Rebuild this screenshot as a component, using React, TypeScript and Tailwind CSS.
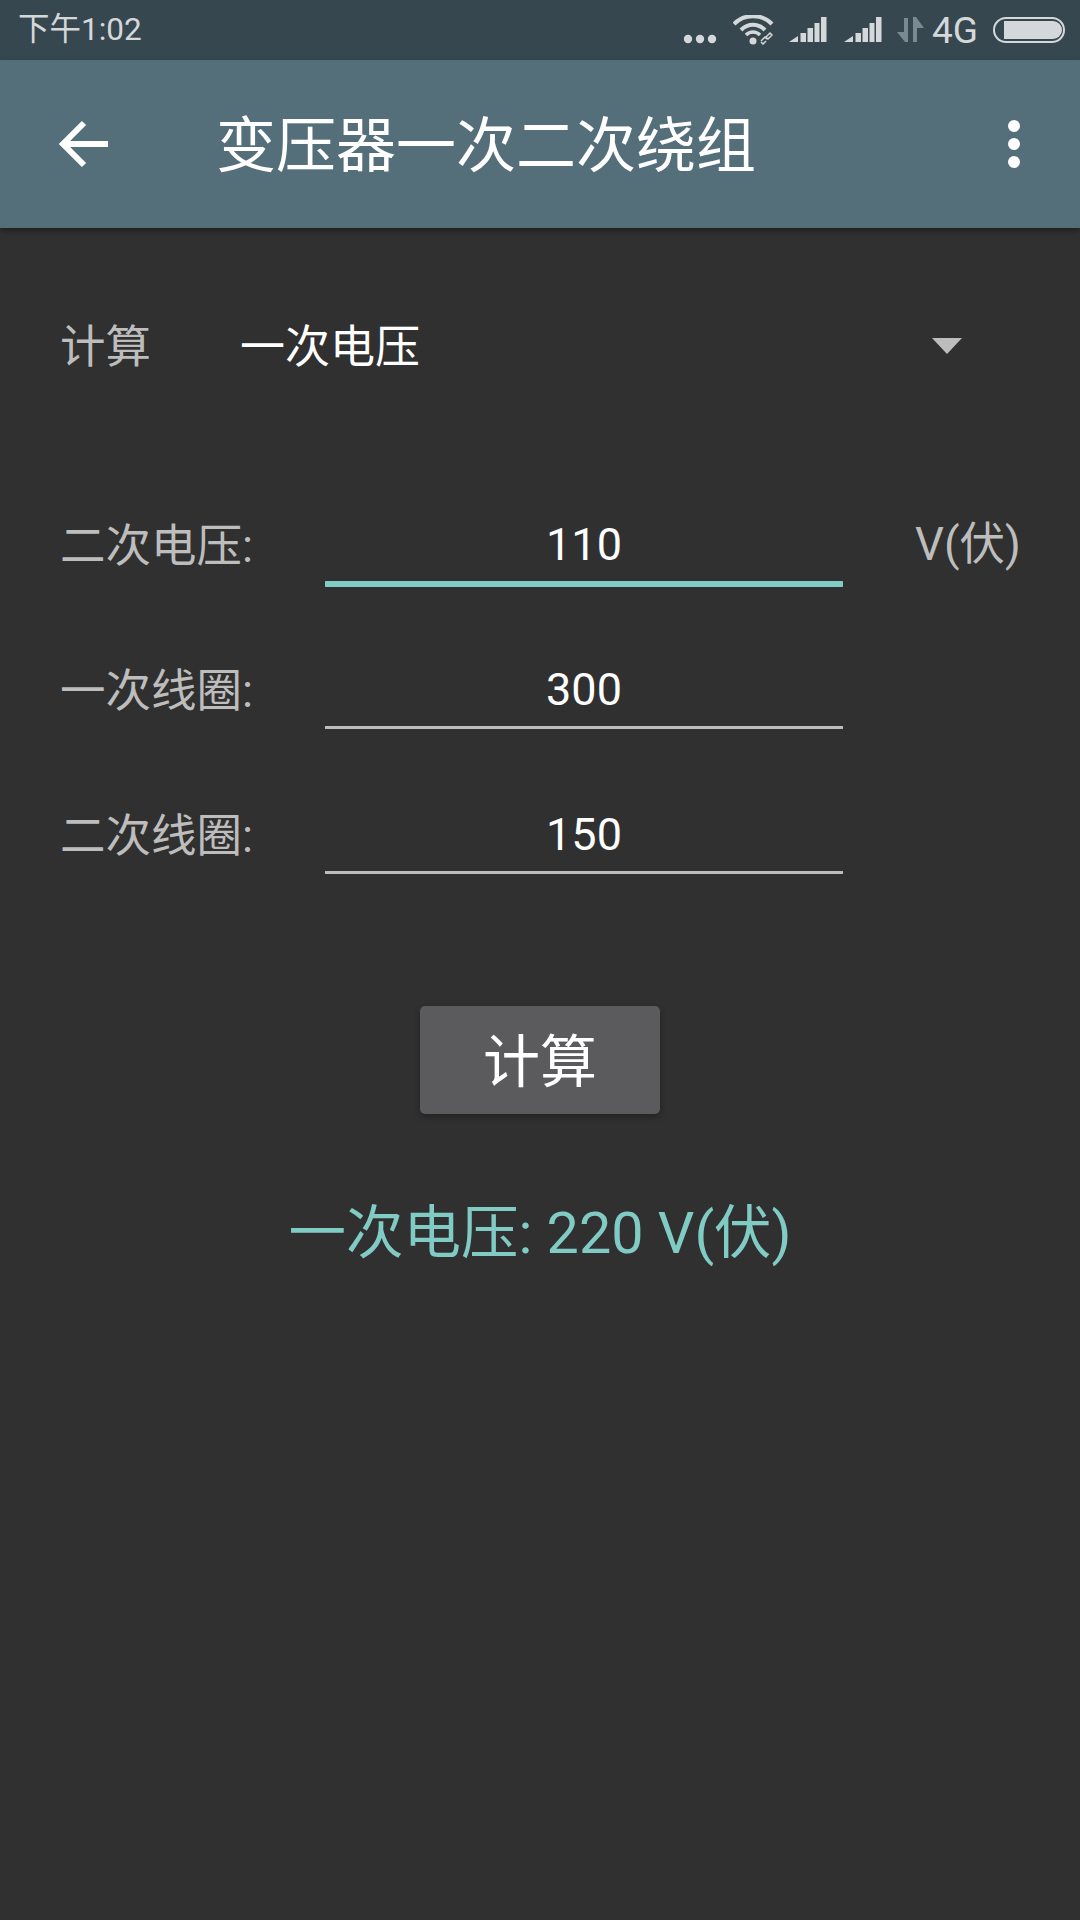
import React from 'react';

const font = 'font-["Roboto","Noto_Sans_CJK_SC",sans-serif]';

const Signal = () => (
  <svg width="38" height="26" viewBox="0 0 38 26" fill="#d5d8da">
    <path d="M0 25 L9 19 V25 Z" />
    <rect x="11.5" y="16" width="5.5" height="9" />
    <rect x="18.5" y="11" width="5.5" height="14" />
    <rect x="25.5" y="6" width="5" height="19" />
    <rect x="32" y="0" width="5.5" height="25" />
  </svg>
);

const StatusBar = () => (
  <div className="h-[60px] bg-[#37474f] flex items-center pl-[18px] pr-[15px] text-[#d5d8da]">
    <span className="text-[31.5px] leading-none">下午1:02</span>
    <div className="ml-auto flex items-center">
      <svg width="34" height="10" viewBox="0 0 34 10" fill="#d5d8da" className="mt-[18px]">
        <circle cx="5" cy="5" r="4.2" />
        <circle cx="17" cy="5" r="4.2" />
        <circle cx="29" cy="5" r="4.2" />
      </svg>
      <svg width="42" height="30" viewBox="0 0 42 30" fill="none" className="ml-[16px]">
        <path d="M1 9 C11 -1.5 29 -1.5 39 9" stroke="#d5d8da" strokeWidth="4" />
        <path d="M8 15 C15 8 25 8 32 15" stroke="#d5d8da" strokeWidth="4" />
        <path d="M13 20 C17 16 23 16 27 20" stroke="#d5d8da" strokeWidth="3.5" />
        <circle cx="20" cy="26" r="3.5" fill="#d5d8da" />
        <path d="M28 26 L32 22 L34 24 M33 26 L30 29 L28 27 M33 22 L37 18 L39 20 L35 24 L33 22" stroke="#d5d8da" strokeWidth="1.5" />
      </svg>
      <div className="ml-[14px]"><Signal /></div>
      <div className="ml-[17px]"><Signal /></div>
      <svg width="28" height="26" viewBox="0 0 28 26" fill="#7b8990" className="ml-[15px]">
        <path d="M7 1 H11 V25 H8 L0 15 H7 Z" />
        <path d="M16 25 H20 V11 H27 L19 0 H16 Z" />
      </svg>
      <span className="ml-[7px] text-[37px] leading-none">4G</span>
      <svg width="72" height="26" viewBox="0 0 72 26" fill="none" className="ml-[15px]">
        <rect x="1" y="1" width="70" height="24" rx="12" stroke="#d5d8da" strokeWidth="2" />
        <path d="M11 4 H60 A9 9 0 0 1 60 22 H11 Z" fill="#d5d8da" />
      </svg>
    </div>
  </div>
);

const Toolbar = () => (
  <div className="relative h-[168px] bg-[#546e7a] flex items-center shadow-[0_3px_6px_rgba(0,0,0,0.35)]">
    <svg width="50" height="48" viewBox="0 0 50 48" fill="none" className="ml-[59px]">
      <path d="M49 24 H4 M25 3 L4 24 L25 45" stroke="white" strokeWidth="6" />
    </svg>
    <h1 className="ml-[107px] mt-[6px] text-[60px] leading-none text-white font-normal">变压器一次二次绕组</h1>
    <svg width="14" height="50" viewBox="0 0 14 50" fill="white" className="ml-auto mr-[59px]">
      <circle cx="7" cy="7" r="6" />
      <circle cx="7" cy="25" r="6" />
      <circle cx="7" cy="43" r="6" />
    </svg>
  </div>
);

const Field = ({ label, value, focused, unit }: { label: string; value: string; focused?: boolean; unit?: string }) => (
  <div className="h-[145px] flex items-start">
    <span className="w-[265px] text-[45.5px] leading-[60px] mt-[75px] text-[#bdbdbd]">{label}</span>
    <div className="w-[518px] h-full flex flex-col items-center justify-end">
      <span className="text-[45px] leading-[60px] text-white mb-[6px]">{value}</span>
      <div className={focused ? 'w-full h-[6px] bg-[#80cbc4]' : 'w-full h-[3px] bg-[#bdbdbd]'} />
      {focused ? null : <div className="h-[3px]" />}
    </div>
    {unit && <span className="ml-[72px] text-[45.5px] leading-[60px] mt-[73px] text-[#bdbdbd]">{unit}</span>}
  </div>
);

export default function App() {
  return (
    <div className={`${font} w-[1080px] h-[1920px] bg-[#303030] flex flex-col`}>
      <StatusBar />
      <Toolbar />
      <div className="pl-[60px] flex flex-col">
        <div className="h-[100px] mt-[70px] flex items-center">
          <span className="w-[180px] text-[45.5px] text-[#bdbdbd]">计算</span>
          <span className="text-[45px] text-white">一次电压</span>
          <svg width="30" height="16" viewBox="0 0 30 16" fill="#bdbdbd" className="ml-[512px] -mt-[4px]">
            <path d="M0 0 H30 L15 16 Z" />
          </svg>
        </div>
        <div className="mt-[44px]">
          <Field label="二次电压:" value="110" focused unit="V(伏)" />
          <Field label="一次线圈:" value="300" />
          <Field label="二次线圈:" value="150" />
        </div>
      </div>
      <button className="self-center mt-[129px] w-[240px] h-[108px] pt-[6px] rounded-[5px] bg-[#5b5b5d] text-white text-[57px] shadow-[0_3px_6px_rgba(0,0,0,0.3)]">
        计算
      </button>
      <div className="mt-[80px] text-center text-[57.5px] leading-[80px] text-[#80cbc4]">一次电压: 220 V(伏)</div>
    </div>
  );
}
